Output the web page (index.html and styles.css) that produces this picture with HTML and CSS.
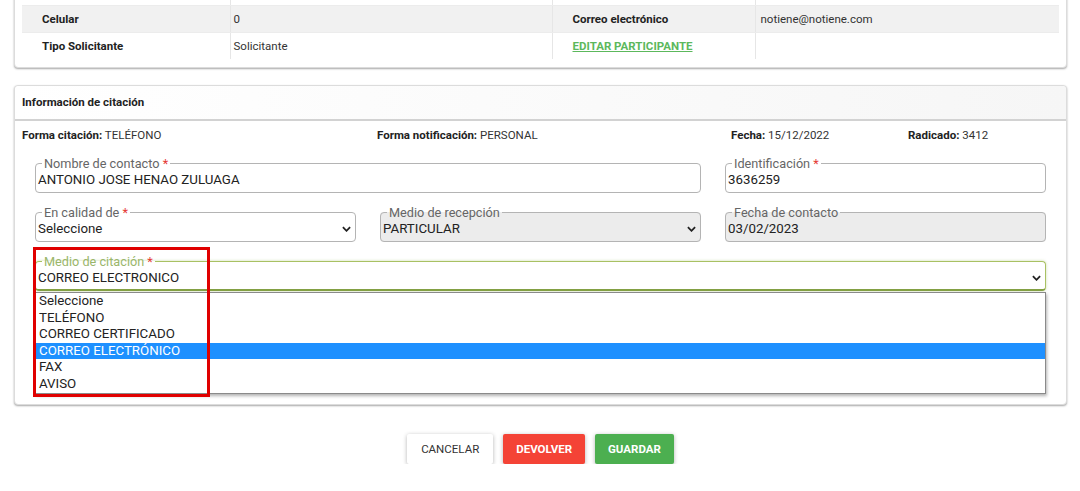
FILE: index.html
```html
<!DOCTYPE html>
<html lang="es">
<head>
  <meta charset="UTF-8" />
  <meta name="viewport" content="width=device-width, initial-scale=1.0" />
  <title>Información de citación</title>
  <link rel="stylesheet" href="styles.css">
</head>
<body>
  <div class="page">

    <section class="card card-participante">
      <table class="datos">
        <colgroup>
          <col class="c1"><col class="c2"><col class="c3"><col>
        </colgroup>
        <tr>
          <td class="lbl"></td>
          <td class="val"></td>
          <td class="lbl"></td>
          <td class="val"></td>
        </tr>
        <tr class="gris">
          <td class="lbl">Celular</td>
          <td class="val">0</td>
          <td class="lbl">Correo electrónico</td>
          <td class="val">notiene@notiene.com</td>
        </tr>
        <tr>
          <td class="lbl">Tipo Solicitante</td>
          <td class="val">Solicitante</td>
          <td class="lbl"><a href="#" class="link-verde">EDITAR PARTICIPANTE</a></td>
          <td class="val"></td>
        </tr>
      </table>
    </section>

    <section class="card card-citacion">
      <div class="card-header">Información de citación</div>
      <div class="card-body">
        <div class="resumen">
          <span><b>Forma citación:</b> TELÉFONO</span>
          <span><b>Forma notificación:</b> PERSONAL</span>
          <span><b>Fecha:</b> 15/12/2022</span>
          <span><b>Radicado:</b> 3412</span>
        </div>

        <div class="campos">
          <fieldset class="campo doble">
            <legend>Nombre de contacto <i>*</i></legend>
            <div class="valor">ANTONIO JOSE HENAO ZULUAGA</div>
          </fieldset>
          <fieldset class="campo">
            <legend>Identificación <i>*</i></legend>
            <div class="valor">3636259</div>
          </fieldset>

          <fieldset class="campo">
            <legend>En calidad de <i>*</i></legend>
            <div class="valor select">Seleccione
              <svg class="chev" viewBox="0 0 10 6"><path d="M1 1l4 4 4-4"/></svg>
            </div>
          </fieldset>
          <fieldset class="campo off">
            <legend>Medio de recepción</legend>
            <div class="valor select">PARTICULAR
              <svg class="chev" viewBox="0 0 10 6"><path d="M1 1l4 4 4-4"/></svg>
            </div>
          </fieldset>
          <fieldset class="campo off">
            <legend>Fecha de contacto</legend>
            <div class="valor">03/02/2023</div>
          </fieldset>

          <div class="campo-abierto">
            <fieldset class="campo foco">
              <legend>Medio de citación <i>*</i></legend>
              <div class="valor select">CORREO ELECTRONICO
                <svg class="chev" viewBox="0 0 10 6"><path d="M1 1l4 4 4-4"/></svg>
              </div>
            </fieldset>
            <ul class="opciones">
              <li>Seleccione</li>
              <li>TELÉFONO</li>
              <li>CORREO CERTIFICADO</li>
              <li class="activa">CORREO ELECTRÓNICO</li>
              <li>FAX</li>
              <li>AVISO</li>
            </ul>
            <div class="marca"></div>
          </div>
        </div>
      </div>
    </section>

    <div class="acciones">
      <button class="btn btn-blanco">Cancelar</button>
      <button class="btn btn-rojo">Devolver</button>
      <button class="btn btn-verde">Guardar</button>
    </div>

  </div>
</body>
</html>
```

FILE: styles.css
```css
body {
  margin: 0;
  font-family: Roboto, "Liberation Sans", sans-serif;
  font-size: 11.5px;
  color: #222;
  background: #fff;
}
.page {
  padding: 0 13px 0 14px;
}
.card {
  background: #fff;
  border: 1px solid #dcdcdc;
  border-radius: 4px;
  box-shadow: 0 1px 2px rgba(0,0,0,0.35);
}
.card-participante {
  margin-top: -29px;
  padding: 7px 7px 8px;
}
.datos {
  width: 100%;
  border-collapse: collapse;
  table-layout: fixed;
}
.datos .c1 { width: 208px; }
.datos .c2 { width: 322px; }
.datos .c3 { width: 203px; }
.datos td {
  height: 26px;
  border-right: 1px solid #e6e6e6;
  border-bottom: 1px solid #ececec;
  padding: 0;
  white-space: nowrap;
  overflow: hidden;
}
.datos td:last-child { border-right: none; }
.datos tr:last-child td { border-bottom: none; }
.datos .gris td {
  background: #f1f1f1;
}
.datos .lbl {
  font-weight: 700;
  padding-left: 20px;
}
.datos .val {
  padding-left: 3px;
  color: #333;
}
.datos td:nth-child(4) {
  padding-left: 5px;
}
.link-verde {
  color: #5cb85c;
  font-weight: 700;
}

.card-citacion {
  margin-top: 17px;
}
.card-header {
  height: 33px;
  line-height: 33px;
  padding-left: 7px;
  font-weight: 700;
  background: linear-gradient(to right, #fff, #f6f6f6);
  border-bottom: 2px solid #d2d2d2;
  border-radius: 4px 4px 0 0;
}
.card-body {
  padding: 4px 7px 113px;
}
.resumen {
  display: grid;
  grid-template-columns: 355px 354px 177px 1fr;
  line-height: 20px;
  color: #333;
}
.resumen b {
  color: #222;
}
.campos {
  display: grid;
  grid-template-columns: repeat(3, 321px);
  column-gap: 24px;
  row-gap: 12px;
  margin: 11px 0 0 13px;
}
.campo {
  margin: 0;
  min-width: 0;
  padding: 0 2px 3px;
  border: 1px solid #b4b4b4;
  border-radius: 4px;
}
.campo legend {
  margin-left: 4px;
  padding: 0 2px;
  font-size: 12.7px;
  line-height: 15px;
  color: #666;
}
.campo legend i {
  font-style: normal;
  color: #e53935;
}
.campo .valor {
  font-size: 13.3px;
  line-height: 18px;
  color: #222;
}
.doble {
  grid-column: span 2;
}
.off {
  background: #ececec;
}
.select {
  display: flex;
  justify-content: space-between;
  align-items: center;
}
.chev {
  width: 9px;
  height: 6px;
  margin-right: 2px;
  fill: none;
  stroke: #222;
  stroke-width: 2;
}
.campo-abierto {
  grid-column: span 3;
  position: relative;
}
.foco {
  border-color: #a9c163;
  border-bottom: 2px solid #83a043;
  box-shadow: 0 0 3px rgba(139,176,74,0.45);
  padding-bottom: 2px;
}
.foco legend {
  color: #9ab66a;
}
.opciones {
  position: absolute;
  top: calc(100% + 1px);
  left: 0;
  right: 0;
  margin: 0;
  padding: 0;
  list-style: none;
  background: #fff;
  border: 1px solid #8a8a8a;
  box-shadow: 1px 2px 3px rgba(0,0,0,0.3);
  z-index: 2;
}
.opciones li {
  font-size: 13.3px;
  line-height: 16.6px;
  padding-left: 3px;
  color: #222;
}
.opciones .activa {
  background: #1e90ff;
  color: #fff;
}
.marca {
  position: absolute;
  left: -2px;
  top: -7px;
  width: 171px;
  height: 144px;
  border: 3px solid #e00000;
  z-index: 3;
}

.acciones {
  display: flex;
  justify-content: center;
  gap: 10px;
  margin-top: 29px;
}
.btn {
  height: 30px;
  padding: 0 14px;
  border: none;
  border-radius: 2px;
  font-family: Roboto, "Liberation Sans", sans-serif;
  font-size: 11.5px;
  text-transform: uppercase;
  box-shadow: 0 1px 4px rgba(0,0,0,0.3);
  cursor: pointer;
}
.btn-blanco {
  background: #fff;
  color: #333;
}
.btn-rojo {
  background: #f44336;
  color: #fff;
  font-weight: 700;
  padding: 0 13px;
}
.btn-verde {
  background: #4caf50;
  color: #fff;
  font-weight: 700;
  padding: 0 13px;
}
```
